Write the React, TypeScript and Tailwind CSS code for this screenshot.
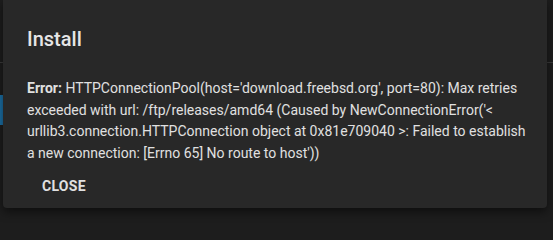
export default function App() {
  return (
    <div className="relative h-screen min-h-[213px] w-full min-w-[553px] overflow-hidden bg-[#1d1d1d] font-['Roboto','Liberation_Sans',sans-serif]">
      {/* bits of the page showing behind the dialog */}
      <div className="absolute left-0 top-[62px] h-px w-full bg-[#3a3a3a]" />
      <div className="absolute left-0 top-[95px] h-[30px] w-[3px] bg-[#1b6ea3]" />

      <div className="relative mx-[3px] h-[208px] w-[544px] rounded-b-[4px] bg-[#282828] shadow-[0_4px_10px_rgba(0,0,0,0.5)]">
        <div className="px-6 pt-[26px] pb-[26px]">
          <h2 className="text-[20px] font-medium leading-[26px] text-[#e6e6e6]">Install</h2>
        </div>
        <div className="whitespace-nowrap px-6 text-[14px] leading-[21.5px] text-[#e0e0e0]">
          <b className="font-bold">Error:</b> HTTPConnectionPool(host='download.freebsd.org', port=80): Max retries
          <br />
          exceeded with url: /ftp/releases/amd64 (Caused by NewConnectionError('&lt;
          <br />
          urllib3.connection.HTTPConnection object at 0x81e709040 &gt;: Failed to establish
          <br />
          a new connection: [Errno 65] No route to host'))
        </div>
        <div className="flex px-[23px] pt-[4px]">
          <button className="h-9 rounded px-4 text-[14px] font-bold uppercase tracking-[0.02em] text-[#e0e0e0]">
            Close
          </button>
        </div>
      </div>
    </div>
  );
}
